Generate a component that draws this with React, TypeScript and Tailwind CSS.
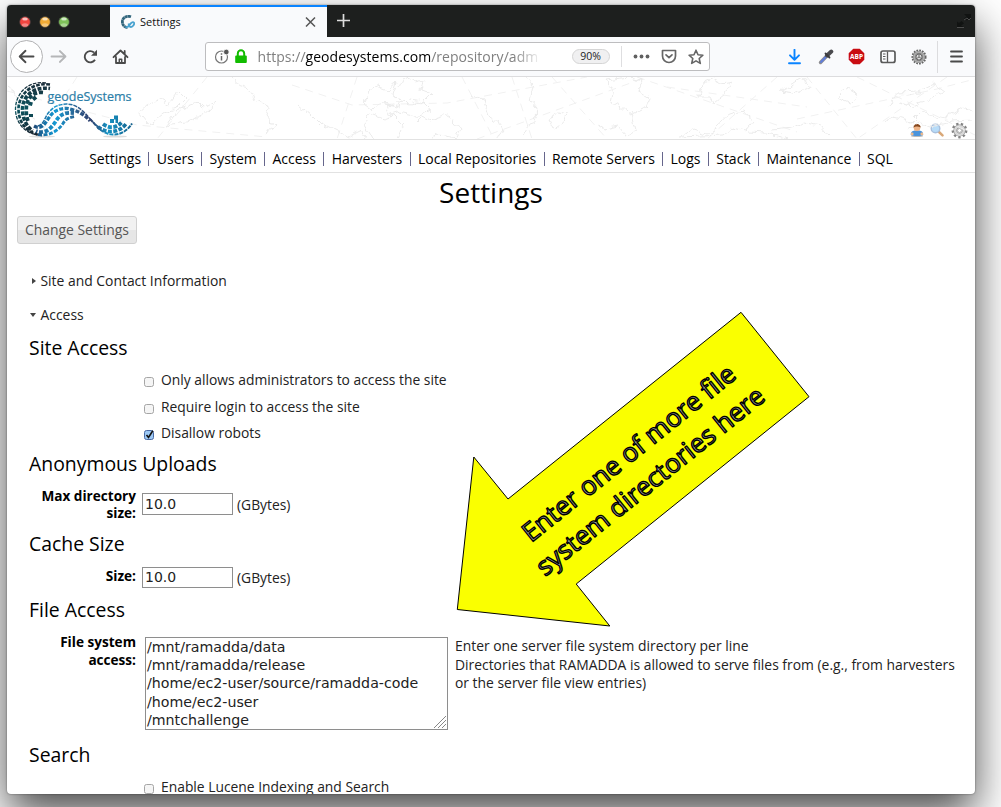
import React from "react";

const NAV = ["Settings", "Users", "System", "Access", "Harvesters", "Local Repositories", "Remote Servers", "Logs", "Stack", "Maintenance", "SQL"];

const DIRECTORIES = ["/mnt/ramadda/data", "/mnt/ramadda/release", "/home/ec2-user/source/ramadda-code", "/home/ec2-user", "/mntchallenge"];

function Light({ color }: { color: string }) {
  return (
    <svg width="12" height="12" viewBox="0 0 12 12">
      <circle cx="6" cy="6" r="5.4" fill={color} stroke="#3a3a3a" strokeWidth="0.8" />
      <ellipse cx="6" cy="3" rx="2.8" ry="1.5" fill="#fff" opacity="0.65" />
      <ellipse cx="6" cy="9" rx="3.2" ry="1.8" fill="#fff" opacity="0.35" />
    </svg>
  );
}

function Favicon() {
  return (
    <svg width="14" height="14" viewBox="0 0 14 14" fill="none">
      <path d="M10 1.8C5 0 1 3.4 1.4 7.4c.3 3.4 2.8 5.2 5.2 5.2" stroke="#33667d" strokeWidth="2.8" strokeDasharray="3 .3" />
      <path d="M4.5 12c2.5.6 3.8-1.2 4.8-3s3-2.4 3.7-1.2-1 4.2-3 4.2S8 10 7.500 8.500" stroke="#4aa3d0" strokeWidth="1.8" />
    </svg>
  );
}

function TitleBar() {
  return (
    <div className="flex h-8 bg-[#1d1f1e]">
      <div className="flex w-[103px] items-center gap-[7.500px] pl-3 pt-[2px]">
        <Light color="#f2443f" />
        <Light color="#f2ab35" />
        <Light color="#7fc25a" />
      </div>
      <div className="flex w-[217px] items-center border-t-2 border-[#0a84ff] bg-[#f9fafc] pl-[11px] pr-[10px]">
        <Favicon />
        <span className="ml-[5px] text-[11px] text-[#111]">Settings</span>
        <svg className="ml-auto" width="13" height="13" viewBox="0 0 13 13" stroke="#555" strokeWidth="1.500">
          <path d="M2 1.500l9 9M11 1.500l-9 9" />
        </svg>
      </div>
      <svg className="ml-[9px] mt-2" width="15" height="15" viewBox="0 0 15 15" stroke="#ddd" strokeWidth="1.700">
        <path d="M7.500 1v13M1 7.500h13" />
      </svg>
      <svg className="ml-auto mr-[3px] mt-2" width="16" height="16" viewBox="0 0 16 16" fill="none">
        <path d="M8 1h7v6l-2-1.500-2 2-3-2 2.500-2z M1 8.500l2 1.500 2.500-2 2.500 2.500-3 2 3 1.500H1z" fill="#111312" />
        <path d="M8 7l3-2 2 2 2-2M1 14.500h7" stroke="#5a5a5a" strokeWidth="0.8" />
      </svg>
    </div>
  );
}

function ToolBar() {
  return (
    <div className="flex h-10 items-center border-b border-[#dcdcde] bg-[#f9fafc]">
      <svg className="ml-[2px] shrink-0" width="34" height="34" viewBox="0 0 34 34" fill="none">
        <circle cx="17.500" cy="16.500" r="16" fill="#fff" stroke="#b0b0b2" />
        <path d="M24.500 16.500H11M16.500 10.800l-5.800 5.700 5.800 5.700" stroke="#4a4a4a" strokeWidth="1.900" strokeLinecap="round" strokeLinejoin="round" />
      </svg>
      <svg className="ml-[7px] shrink-0" width="17" height="16" viewBox="0 0 17 16" fill="none" stroke="#b5b6b8" strokeWidth="1.800" strokeLinecap="round" strokeLinejoin="round">
        <path d="M1.500 7.500h14M9.800 2l5.700 5.500L9.800 13" />
      </svg>
      <svg className="ml-[15px] shrink-0" width="16" height="16" viewBox="0 0 16 16" fill="none">
        <path d="M13 10.800A5.600 5.600 0 1 1 12 3.500" stroke="#4a4a4a" strokeWidth="1.900" />
        <path d="M15 0.800v6H9z" fill="#4a4a4a" />
      </svg>
      <svg className="ml-[14px] shrink-0" width="17" height="16" viewBox="0 0 17 16" fill="none" stroke="#4a4a4a" strokeWidth="1.800" strokeLinejoin="round" strokeLinecap="round">
        <path d="M1.500 8.200l7-6.700 7 6.700M4 8v6h9V8M12.700 2v3" />
        <path d="M7.300 13.500v-3.200h2.400v3.200" strokeWidth="1.500" />
      </svg>
      <div className="ml-[76px] flex h-[29px] w-[505px] shrink-0 items-center rounded-[3px] border border-[#bdbdbf] bg-white">
        <svg className="ml-2 shrink-0" width="16" height="16" viewBox="0 0 16 16" fill="none">
          <circle cx="7.500" cy="8" r="6" stroke="#777" strokeWidth="1.200" />
          <path d="M7.500 7v4.500M7.500 4.300v1.500" stroke="#666" strokeWidth="1.500" />
          <circle cx="12.300" cy="3" r="2.800" fill="#555" stroke="#fff" strokeWidth="0.8" />
        </svg>
        <svg className="ml-1 shrink-0" width="14" height="15" viewBox="0 0 14 15" fill="none">
          <path d="M3.800 7V4.500a3.200 3.200 0 0 1 6.400 0V7" stroke="#12bc00" strokeWidth="2" />
          <rect x="1.200" y="6.500" width="11.600" height="7.500" rx="1" fill="#12bc00" />
        </svg>
        <div className="ml-[9.500px] w-[284px] overflow-hidden whitespace-nowrap text-[14px] tracking-[0.040px] text-[#808080] [mask-image:linear-gradient(to_right,black_90%,transparent_100%)]">
          https://<span className="text-black">geodesystems.com</span>/repository/adm
        </div>
        <span className="ml-[30px] flex h-[15px] w-[38px] items-center justify-center rounded-full border border-[#d5d5d5] bg-[#f0f0f1] text-[10.500px] text-[#222]">90%</span>
        <span className="ml-[11px] h-[21px] w-px bg-[#dedee0]" />
        <svg className="ml-[11px] shrink-0" width="17" height="5" viewBox="0 0 17 5" fill="#606060">
          <circle cx="2.500" cy="2.500" r="1.900" />
          <circle cx="8.500" cy="2.500" r="1.900" />
          <circle cx="14.500" cy="2.500" r="1.900" />
        </svg>
        <svg className="ml-[11px] shrink-0" width="16" height="15" viewBox="0 0 16 15" fill="none" stroke="#666" strokeLinecap="round" strokeLinejoin="round">
          <path d="M1.500 1.500h13v5.500a6.500 6.500 0 0 1-13 0z" strokeWidth="1.700" />
          <path d="M5 5.800l3 2.900 3-2.900" strokeWidth="1.700" />
        </svg>
        <svg className="ml-[11px] shrink-0" width="16" height="16" viewBox="0 0 16 16" fill="none" stroke="#666" strokeWidth="1.600" strokeLinejoin="round">
          <path d="M8 1.200l2 4.500 4.900.5-3.700 3.300 1.100 4.900L8 11.900l-4.300 2.500 1.100-4.900L1.100 6.200 6 5.700z" />
        </svg>
      </div>
      <svg className="ml-[77px] shrink-0" width="14" height="16" viewBox="0 0 14 16" fill="none" stroke="#0a84ff" strokeWidth="1.900" strokeLinecap="round" strokeLinejoin="round">
        <path d="M7.500 .8v9.500M3 6.300l4.500 4.500L12 6.300M2 14.300h11" />
      </svg>
      <svg className="ml-[17px] shrink-0" width="16" height="16" viewBox="0 0 16 16" fill="none" strokeLinecap="round">
        <path d="M2.500 13.500L9 6.800" stroke="#8c8c90" strokeWidth="3.400" />
        <path d="M3 13l4.800-5" stroke="#5f7ddb" strokeWidth="1.900" />
        <path d="M9 6.500L13.300 2.500" stroke="#4a4a4e" strokeWidth="4" />
        <path d="M7.500 4.500l4 4" stroke="#3b3b3e" strokeWidth="1.800" />
      </svg>
      <svg className="ml-[14px] shrink-0" width="17" height="17" viewBox="0 0 17 17">
        <path d="M5.300.7h6.400l4.600 4.600v6.400l-4.600 4.600H5.300L.7 11.700V5.300z" fill="#c90c12" />
        <text x="8.500" y="11.200" textAnchor="middle" fontSize="7.200" fontWeight="700" fill="#fff" textLength="13" lengthAdjust="spacingAndGlyphs">ABP</text>
      </svg>
      <svg className="ml-[15px] shrink-0" width="16" height="14" viewBox="0 0 16 14" fill="none" stroke="#5a5a5a">
        <rect x="1" y="1" width="14" height="11.500" rx="2" strokeWidth="1.700" />
        <path d="M7.500 1.500v11" strokeWidth="1.300" />
        <path d="M3 4h2.500M3 6.500h2.500M3 9h2.500" />
      </svg>
      <svg className="ml-[15px] shrink-0" width="16" height="16" viewBox="0 0 17 17" fill="none">
        <circle cx="8.500" cy="8.500" r="7" stroke="#666" strokeWidth="2" strokeDasharray="1.900 1.100" />
        <circle cx="8.500" cy="8.500" r="5" stroke="#8c8c8c" strokeWidth="3" />
        <circle cx="8.500" cy="8.500" r="5.200" stroke="#bdbdbd" strokeWidth="1" />
        <circle cx="8.500" cy="8.500" r="3.300" stroke="#555" fill="#ddd" />
        <path d="M8.500 8.500V5M8.500 8.500l3 2M8.500 8.500l-3 2" stroke="#666" />
      </svg>
      <span className="ml-[10px] h-8 w-px bg-[#dcdcde]" />
      <svg className="ml-3 shrink-0" width="13" height="14" viewBox="0 0 13 14" stroke="#4a4a4a" strokeWidth="1.800" strokeLinecap="round">
        <path d="M1 1.500h11M1 6.500h11M1 11.500h11" />
      </svg>
    </div>
  );
}

function MapLines() {
  return (
    <svg className="absolute inset-0" width="968" height="62" viewBox="0 0 968 62" fill="none" stroke="#f1f1f1">
      <filter id="coast" x="0" y="0" width="968" height="62" filterUnits="userSpaceOnUse">
        <feTurbulence type="fractalNoise" baseFrequency="0.120" numOctaves="2" seed="4" />
        <feDisplacementMap in="SourceGraphic" scale="9" xChannelSelector="R" yChannelSelector="G" />
      </filter>
      <path strokeDasharray="8 6" d="M0 14L130 48L260 60M70 0L30 62M200 0L150 62M285 8L345 28L440 26L580 0M350 0L330 62M455 0L487 62M505 0L525 62M545 0L600 62M630 0L790 55M770 0L700 62M470 62L640 0M790 42L930 12L968 2M850 0L968 58M800 0L850 62M660 10L800 30M940 0L850 62" />
      <g filter="url(#coast)" stroke="#ebebeb">
        <path d="M0 10l7 5 3 8 6 2 4 12 9 6M132 36l10-9 12-5 8 5 9-13 8 8-10 10-12 4-9 8-8 2zM160 48l13-17 18-6 6 6 13-7-9 10-14 9-9 2zM225 0l7 8 10 3 6 12 14 8-2 8 9 11-11 7M292 28l12 10 8 8 9 3 12 6 9 5 12-6 5 7M357 25l6-11 8-5 10 4 9-8-4 13 9 4-11 7-12-2-6 5zM378 26l12 5 5-11 8 8 12-4 9 9-14 6-17-4-9 3zM365 62l-8-14 6-11 14 5 9-3 10 10-5 12M406 47l8-8 11 4 16-5 12 14-5 9-17-3-8 5M392 10l5-10 11 5 8-2-2 10 11 4-8 8-15-2M464 18l12 5 5 15 10 6 4 10-6 8M515 60l7-13 6-2 2-14-7-8 3-14-9-8M542 45l8-10 9 2-3 9-10 7zM600 3l6 8-3 14 10 4 12 10 14-7 4-12-12-7 6-9-14-4zM590 47l8 5 13-3 8 9 10-5-5-19M691 20l6-14 10-4 7 4 11-2-7 14-11 9-4-7zM673 60l12-8 15 5 11-8 9-11 15-5 12 10-9 11-14-3-8 7zM741 55l19 1 23 5M773 14l10-5 14-9 5 10-15 6zM830 20l11-8 9 5-7 8zM883 30l8-14 21-1 15-8 10 7-15 8-16 7-14-3M877 44l10-4 18 5 10-10 23 6 18-11 9 4M764 53l22-2 10-6 18 4 9 11M900 53l11-8 13 5 21-6 20-1" />
      </g>
    </svg>
  );
}

function Logo() {
  return (
    <svg className="absolute left-[7px] top-[3px]" width="122" height="60" viewBox="14 80 122 60" fill="none">
      <defs>
        <linearGradient id="ring" x1="0" y1="82" x2="0" y2="136" gradientUnits="userSpaceOnUse">
          <stop offset="0" stopColor="#1b2b38" />
          <stop offset="0.500" stopColor="#0c5560" />
          <stop offset="1" stopColor="#17222e" />
        </linearGradient>
        <linearGradient id="wave" x1="34" y1="0" x2="132" y2="0" gradientUnits="userSpaceOnUse">
          <stop offset="0" stopColor="#1f4a78" />
          <stop offset="0.220" stopColor="#149ad4" />
          <stop offset="0.430" stopColor="#2b5f8e" />
          <stop offset="0.580" stopColor="#31406e" />
          <stop offset="0.750" stopColor="#1793c4" />
          <stop offset="1" stopColor="#14618d" />
        </linearGradient>
      </defs>
      <ellipse cx="42" cy="136.500" rx="13" ry="1" fill="#ddd" />
      <ellipse cx="115" cy="136.500" rx="12" ry="1" fill="#ddd" />
      <g stroke="url(#ring)">
        <path d="M46 83C25 80 15 97 15.500 110c.5 12 8 24 26 25.500" strokeWidth="1.300" strokeDasharray="3.600 1.200" />
        <path d="M50 84.500C28 82 18 98 18.500 110c.5 12 7 21 19 24.500" strokeWidth="2.700" strokeDasharray="3.700 1.400" />
        <path d="M50 88.500C31 86 22 99 22.500 110c.3 9 4 16 10 21" strokeWidth="3.600" strokeDasharray="4 1.500" strokeDashoffset="2.500" />
        <path d="M43 92.500C33 91.500 27 99 26.500 106s0 11 2 16" strokeWidth="3.600" strokeDasharray="4 1.800" />
        <path d="M36 97l-3 2.500M31 102l-1 3.500M31 114v3" strokeWidth="4" />
      </g>
      <g stroke="url(#wave)">
        <path d="M38 126c7-2 6-9 12-15 6-7 16-8 23-6 12 4 17 17 26 22" strokeWidth="1.500" strokeDasharray="4 1" />
        <path d="M34 126c9 5 12-5 17-11 4-5 12-8 19-6 8 2 14 5 20 12" strokeWidth="3.300" strokeDasharray="4 1.500" />
        <path d="M36 131c10 4 16-4 20-10 4-7 10-9 18-8" strokeWidth="3.800" strokeDasharray="4 1.600" strokeDashoffset="2.500" />
        <path d="M38 134.500c10 2 20-3 25-11 3-5 6-6 12-7" strokeWidth="2.900" strokeDasharray="4 1.500" />
        <path d="M90 119c6 6 12 15.500 23 15.500 9 .5 15-5 19-11" strokeWidth="2" strokeDasharray="4 1" />
        <path d="M98 127c8 6 20 7 28-3" strokeWidth="3.600" strokeDasharray="4 1.400" />
        <path d="M103 124c7 5 13 4 19-2M110 121l8 0M114 117.500l4 0" strokeWidth="3.800" strokeDasharray="4 1.500" />
      </g>
      <text x="47.500" y="100.500" fontSize="12" fill="#2b7ea8" stroke="#2b7ea8" strokeWidth="0.200" textLength="84" lengthAdjust="spacingAndGlyphs">geodeSystems</text>
    </svg>
  );
}

function SiteHeader() {
  return (
    <header className="relative flex h-[63px] items-end justify-end gap-[6px] border-b border-[#e2e2e2] pr-[7px]">
      <MapLines />
      <Logo />
      <svg className="mb-[2px]" width="14" height="14" viewBox="0 0 14 14">
        <ellipse cx="7" cy="13" rx="6" ry="1" fill="#bbb" />
        <path d="M.8 12c-.4-3 1.800-4 3.700-4.500h5c2 .5 4 1.500 3.700 4.500-2 1.300-10 1.300-12.400 0z" fill="#4a94dc" />
        <circle cx="2.200" cy="11" r="1.400" fill="#efb98b" />
        <circle cx="11.800" cy="11" r="1.400" fill="#efb98b" />
        <circle cx="7" cy="4.800" r="3.300" fill="#eeb488" />
        <path d="M3.300 4.500C3.300-.2 10.700-.2 10.700 4.500 8 2.800 5 3.600 3.300 4.500z" fill="#85461c" />
      </svg>
      <svg className="mb-[2px]" width="14" height="14" viewBox="0 0 14 14">
        <path d="M8.500 8.500l4 3.800" stroke="#d9a878" strokeWidth="2.500" strokeLinecap="round" />
        <circle cx="5.500" cy="5.500" r="4.300" fill="#b8dcf8" stroke="#a9bfdc" strokeWidth="1.400" />
      </svg>
      <svg className="ml-[1px]" width="17" height="17" viewBox="0 0 17 17" fill="none">
        <circle cx="8.500" cy="8.500" r="6.600" stroke="#858585" strokeWidth="2.600" strokeDasharray="2.300 2.300" />
        <circle cx="8.500" cy="8.500" r="4.300" stroke="#8b8b8b" strokeWidth="3.600" />
        <circle cx="8.500" cy="8.500" r="4.300" stroke="#d8d8d8" strokeWidth="2.500" />
        <circle cx="8.500" cy="8.500" r="2" stroke="#999" strokeWidth="0.800" fill="#fff" />
      </svg>
    </header>
  );
}

function Check({ label, checked = false }: { label: string; checked?: boolean }) {
  return (
    <div className="flex h-[26.700px] items-center pl-[137px] text-[13.850px] text-[#222]">
      <svg className="mt-[3px] shrink-0" width="10" height="10" viewBox="0 0 10 10" fill="none">
        <rect x="0.500" y="0.500" width="9" height="9" rx="2" fill={checked ? "#9cc8f5" : "#f5f5f5"} stroke={checked ? "#4a6aa5" : "#a5a5a5"} />
        {checked && <path d="M2.500 5l2 2.500L8.800.8" stroke="#111" strokeWidth="1.600" />}
      </svg>
      <span className="ml-[7px]">{label}</span>
    </div>
  );
}

function Heading({ children, className }: { children: string; className: string }) {
  return <h2 className={"flex h-[30px] items-center pb-[2px] pl-[22px] text-[19.400px] text-black " + className}>{children}</h2>;
}

function Arrow() {
  return (
    <svg className="absolute left-[440px] top-[300px]" width="380" height="336" viewBox="440 300 380 336">
      <polygon points="741,312.300 809,396.700 576.200,584 609.800,626 457.300,609.500 473.800,457 508,499" fill="#faff00" stroke="#000" strokeWidth="1" />
      <g fill="#a8a8a8" stroke="#000" strokeWidth="1.350" strokeLinejoin="round" fontSize="26" fontFamily="'Open Sans'" fontWeight="500">
        <text transform="translate(531 543) rotate(-38.700)" textLength="265" lengthAdjust="spacingAndGlyphs">Enter one of more file</text>
        <text transform="translate(545 577) rotate(-38.700)" textLength="284" lengthAdjust="spacingAndGlyphs">system directories here</text>
      </g>
    </svg>
  );
}

export default function App() {
  return (
    <div className="relative h-[807px] w-[1001px] overflow-hidden bg-white pl-[7px] pt-[5px] font-['Open_Sans','Noto_Sans',sans-serif]">
      <div className="h-[789px] w-[968px] overflow-hidden rounded-[4px] bg-white shadow-[0_20px_44px_rgba(0,0,0,0.700),0_0_2px_rgba(0,0,0,0.500)]">
        <TitleBar />
        <ToolBar />
        <SiteHeader />
        <nav className="flex h-[33px] items-center justify-center gap-[7.350px] border-b border-[#e2e2e2] pb-px pt-[6px] text-[14px] text-black">
          {NAV.map((item, i) => (
            <React.Fragment key={item}>
              {i > 0 && <span className="h-[14px] w-px bg-[#66668c]" />}
              <a>{item}</a>
            </React.Fragment>
          ))}
        </nav>
        <h1 className="flex h-[43px] items-center justify-center pb-[5px] text-[28px] text-black">Settings</h1>
        <button className="ml-[10px] flex h-7 w-[120px] items-center justify-center rounded-[3px] border border-[#d0d0d0] bg-linear-to-b from-[#f1f1f1] from-50% to-[#e6e6e6] to-50% pt-px text-[13.900px] text-[#555]">Change Settings</button>
        <div className="mt-[26px] flex h-[22px] items-center pl-6 text-[13.900px] text-[#222]">
          <svg className="mr-[4.500px]" width="5" height="6" viewBox="0 0 5 6"><path d="M1 0l4 3-4 3z" fill="#444" /></svg>
          Site and Contact Information
        </div>
        <div className="mt-3 flex h-[22px] items-center pl-[23px] text-[13.900px] text-[#222]">
          <svg className="mr-[4.500px]" width="6" height="4" viewBox="0 0 6 4"><path d="M0 0h6L3 4z" fill="#444" /></svg>
          Access
        </div>
        <Heading className="mt-[8px]">Site Access</Heading>
        <div className="mt-[3px]">
          <Check label="Only allows administrators to access the site" />
          <Check label="Require login to access the site" />
          <Check label="Disallow robots" checked />
        </div>
        <Heading className="mt-[2px]">Anonymous Uploads</Heading>
        <div className="mt-[8px] flex h-[36px] text-[13.850px] text-[#222]">
          <label className="w-[129px] text-right text-[13.600px] font-bold leading-[17px] text-black">Max directory<br />size:</label>
          <div className="ml-[6px] mt-[6px] flex h-[22px] w-[91px] items-center border border-[#8e8e8e] pl-[2px] font-['DejaVu_Sans',sans-serif] text-[14px]">10.0</div>
          <span className="ml-[4px] mt-[8px]">(GBytes)</span>
        </div>
        <Heading className="mt-[6px]">Cache Size</Heading>
        <div className="mt-[8px] flex h-[21px] text-[13.850px] text-[#222]">
          <label className="w-[129px] text-right text-[13.600px] font-bold leading-[18px] text-black">Size:</label>
          <div className="ml-[6px] flex h-[21px] w-[91px] items-center border border-[#8e8e8e] pl-[2px] font-['DejaVu_Sans',sans-serif] text-[14px]">10.0</div>
          <span className="ml-[4px] mt-px">(GBytes)</span>
        </div>
        <Heading className="mt-[7px]">File Access</Heading>
        <div className="mt-[12px] flex h-[93px] text-[14px] text-[#222]">
          <label className="-mt-[4px] w-[129px] text-right text-[13.600px] font-bold leading-[17.500px] text-black">File system<br />access:</label>
          <div className="relative ml-[9px] h-[93px] w-[303px] border border-[#8e8e8e] pl-[1px] font-['DejaVu_Sans',sans-serif] text-[14.200px] leading-[18.200px]">
            {DIRECTORIES.map((d) => <div key={d}>{d}</div>)}
            <svg className="absolute bottom-px right-px" width="13" height="13" viewBox="0 0 13 13" stroke="#888"><path d="M1 13L13 1M5 13l8-8M9 13l4-4" /></svg>
          </div>
          <div className="ml-[7px] whitespace-nowrap text-[13.880px] leading-[18.500px]">
            Enter one server file system directory per line<br />
            Directories that RAMADDA is allowed to serve files from (e.g., from harvesters<br />
            or the server file view entries)
          </div>
        </div>
        <Heading className="mt-[10px]">Search</Heading>
        <div className="mt-[4px]"><Check label="Enable Lucene Indexing and Search" /></div>
      </div>
      <Arrow />
    </div>
  );
}
